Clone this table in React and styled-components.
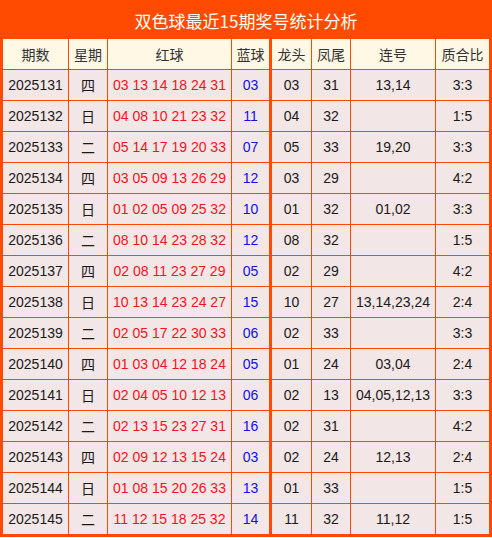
import React from "react";
import styled, { createGlobalStyle } from "styled-components";

const ORANGE = "#ff4a00";

const Global = createGlobalStyle`
  html, body { margin: 0; padding: 0; background: #fff; }
  body { font-family: "Liberation Sans", Arial, "Noto Sans CJK SC", sans-serif; }
`;

const Wrap = styled.div`
  width: 492px;
  box-sizing: border-box;
  border-left: 3px solid ${ORANGE};
  border-right: 3px solid ${ORANGE};
  border-bottom: 3px solid ${ORANGE};
  background: #f2e6e6;
`;

const Title = styled.div`
  height: 39px;
  margin: 0 -3px;
  background: ${ORANGE};
  color: #fff;
  font-family: "Noto Sans CJK SC", "Liberation Sans", sans-serif;
  font-size: 17px;
  display: flex;
  align-items: center;
  justify-content: center;
  padding-top: 1px;
  box-sizing: border-box;
`;

const Row = styled.div`
  display: grid;
  grid-template-columns: 66px 39px 124px 40px 40px 39px 85px 53px;
  height: ${(p) => (p.$last ? 30 : 31)}px;
  background: ${(p) => (p.$head ? "#fff8e4" : "#f2e6e6")};
`;

const Cell = styled.div`
  box-sizing: border-box;
  display: flex;
  align-items: center;
  justify-content: center;
  border-right: ${(p) => (p.$thick ? 3 : p.$end ? 0 : 1)}px solid ${ORANGE};
  border-bottom: ${(p) => (p.$last ? 0 : 1)}px solid ${ORANGE};
  font-size: 14px;
  color: ${(p) => (p.$tone === "red" ? "#f2141e" : p.$tone === "blue" ? "#1010f0" : p.$head ? "#333" : "#1a1a1a")};
  font-family: ${(p) =>
    p.$cjk
      ? `"Noto Sans CJK SC", "Liberation Sans", sans-serif`
      : `"Liberation Sans", Arial, "Noto Sans CJK SC", sans-serif`};
  white-space: pre;
`;

const heads = ["期数", "星期", "红球", "蓝球", "龙头", "凤尾", "连号", "质合比"];

const data = [
  ["2025131", "四", "03 13 14 18 24 31", "03", "03", "31", "13,14", "3:3"],
  ["2025132", "日", "04 08 10 21 23 32", "11", "04", "32", "", "1:5"],
  ["2025133", "二", "05 14 17 19 20 33", "07", "05", "33", "19,20", "3:3"],
  ["2025134", "四", "03 05 09 13 26 29", "12", "03", "29", "", "4:2"],
  ["2025135", "日", "01 02 05 09 25 32", "10", "01", "32", "01,02", "3:3"],
  ["2025136", "二", "08 10 14 23 28 32", "12", "08", "32", "", "1:5"],
  ["2025137", "四", "02 08 11 23 27 29", "05", "02", "29", "", "4:2"],
  ["2025138", "日", "10 13 14 23 24 27", "15", "10", "27", "13,14,23,24", "2:4"],
  ["2025139", "二", "02 05 17 22 30 33", "06", "02", "33", "", "3:3"],
  ["2025140", "四", "01 03 04 12 18 24", "05", "01", "24", "03,04", "2:4"],
  ["2025141", "日", "02 04 05 10 12 13", "06", "02", "13", "04,05,12,13", "3:3"],
  ["2025142", "二", "02 13 15 23 27 31", "16", "02", "31", "", "4:2"],
  ["2025143", "四", "02 09 12 13 15 24", "03", "02", "24", "12,13", "2:4"],
  ["2025144", "日", "01 08 15 20 26 33", "13", "01", "33", "", "1:5"],
  ["2025145", "二", "11 12 15 18 25 32", "14", "11", "32", "11,12", "1:5"],
];

export default function App() {
  return (
    <>
      <Global />
      <Wrap>
        <Title>双色球最近15期奖号统计分析</Title>
        <Row $head>
          {heads.map((h, i) => (
            <Cell key={h} $head $cjk $thick={i === 3} $end={i === 7}>
              {h}
            </Cell>
          ))}
        </Row>
        {data.map((r, ri) => {
          const last = ri === data.length - 1;
          return (
            <Row key={r[0]} $last={last}>
              {r.map((v, i) => (
                <Cell
                  key={i}
                  $last={last}
                  $cjk={i === 1}
                  $thick={i === 3}
                  $end={i === 7}
                  $tone={i === 2 ? "red" : i === 3 ? "blue" : undefined}
                >
                  {v}
                </Cell>
              ))}
            </Row>
          );
        })}
      </Wrap>
    </>
  );
}
